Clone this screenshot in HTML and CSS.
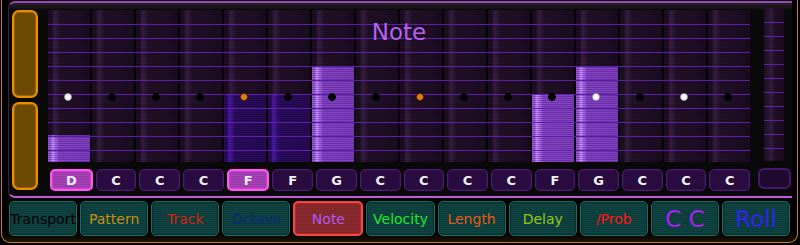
FILE: index.html
```html
<!DOCTYPE html>
<html>
<head>
<meta charset="utf-8">
<link rel="stylesheet" href="styles.css">
</head>
<body>
<div class="frame">
  <div class="panel">
    <div class="side">
      <div class="obtn"></div>
      <div class="obtn"></div>
    </div>
    <div class="main">
      <div class="grid">
        <div class="col"><div class="bar" style="height:27px"></div><span class="dot white"></span></div>
        <div class="col"><span class="dot"></span></div>
        <div class="col"><span class="dot"></span></div>
        <div class="col"><span class="dot"></span></div>
        <div class="col"><div class="bar dim" style="height:68px"></div><span class="dot orange"></span></div>
        <div class="col"><div class="bar dim" style="height:68px"></div><span class="dot"></span></div>
        <div class="col"><div class="bar" style="height:95px"></div><span class="dot"></span></div>
        <div class="col"><span class="dot"></span></div>
        <div class="col"><span class="dot orange"></span></div>
        <div class="col"><span class="dot"></span></div>
        <div class="col"><span class="dot"></span></div>
        <div class="col"><div class="bar" style="height:68px"></div><span class="dot"></span></div>
        <div class="col"><div class="bar" style="height:95px"></div><span class="dot white"></span></div>
        <div class="col"><span class="dot"></span></div>
        <div class="col"><span class="dot white"></span></div>
        <div class="col"><span class="dot"></span></div>
        <div class="lines"></div>
        <div class="title">Note</div>
      </div>
      <div class="notes">
        <div class="nb sel">D</div>
        <div class="nb">C</div>
        <div class="nb">C</div>
        <div class="nb">C</div>
        <div class="nb sel">F</div>
        <div class="nb">F</div>
        <div class="nb">G</div>
        <div class="nb">C</div>
        <div class="nb">C</div>
        <div class="nb">C</div>
        <div class="nb">C</div>
        <div class="nb">F</div>
        <div class="nb">G</div>
        <div class="nb">C</div>
        <div class="nb">C</div>
        <div class="nb">C</div>
      </div>
    </div>
    <div class="right">
      <div class="mini"></div>
      <div class="mbtn"></div>
    </div>
  </div>
  <div class="tabs">
    <div class="tab t-transport">Transport</div>
    <div class="tab t-pattern">Pattern</div>
    <div class="tab t-track">Track</div>
    <div class="tab t-octave">Octave</div>
    <div class="tab sel t-note">Note</div>
    <div class="tab t-velocity">Velocity</div>
    <div class="tab t-length">Length</div>
    <div class="tab t-delay">Delay</div>
    <div class="tab t-prob">/Prob</div>
    <div class="tab big t-cc">C C</div>
    <div class="tab big t-roll">Roll</div>
  </div>
</div>
</body>
</html>
```

FILE: styles.css
```css
html, body {
  margin: 0;
  padding: 0;
  background: #000;
}
body {
  width: 800px;
  height: 245px;
  overflow: hidden;
  font-family: "DejaVu Sans", "Liberation Sans", sans-serif;
}
.frame {
  margin-left: 1px;
  width: 797px;
  height: 243px;
  box-sizing: border-box;
  border: 1px solid #c8870c;
  border-top: 0;
  border-radius: 0 0 9px 9px;
  padding-top: 1px;
  background: linear-gradient(#000 0, #000 232px, #1c1404 242px);
}
.panel {
  margin-left: 6px;
  width: 784px;
  height: 197px;
  box-sizing: border-box;
  border-top: 2px solid #a340c4;
  border-bottom: 2px solid #c25ade;
  border-left: 1px solid #3a2440;
  border-radius: 7px 0 0 7px;
  background: linear-gradient(#242026 0, #161416 5px, #0a090a 7px);
  display: flex;
  padding: 7px 0 0 3px;
}
.side {
  width: 26px;
  display: flex;
  flex-direction: column;
  gap: 4px;
}
.obtn {
  height: 88px;
  box-sizing: border-box;
  border: 2px solid #ea8e00;
  border-radius: 7px;
  background: #6c4900;
  box-shadow: inset 0 0 0 1px #9a6600;
}
.main {
  margin-left: 10px;
  width: 702px;
}
.grid {
  position: relative;
  height: 152px;
  display: grid;
  grid-template-columns: repeat(16, 1fr);
  column-gap: 2px;
  background: #060306;
}
.col {
  position: relative;
  display: flex;
  flex-direction: column;
  justify-content: flex-end;
  background:
    repeating-linear-gradient(rgba(0,0,0,0.16) 0 1px, rgba(0,0,0,0) 1px 2px),
    linear-gradient(to right, #1e0d24 0, #1e0d24 4px, #2e1838 5px, #361f40 7px, #2d1736 10px, #221027 12px, #200e26 32px, #1a0b1f 42px);
}
.bar {
  background:
    repeating-linear-gradient(rgba(40,0,80,0.28) 0 1px, rgba(0,0,0,0) 1px 2px),
    linear-gradient(to right, #9a58d8 0, #9a58d8 3px, #c48cff 4px, #c48cff 6px, #a868ea 7px, #a062e2 9px, #8644c6 11px, #8240c2 42px);
}
.bar.dim {
  background:
    repeating-linear-gradient(rgba(0,0,0,0.18) 0 1px, rgba(0,0,0,0) 1px 2px),
    linear-gradient(to right, #2a0b5a 0, #2a0b5a 3px, #4c1ca4 5px, #44189a 7px, #320f6c 10px, #2c0c5e 12px, #280a56 42px);
}
.dot {
  position: absolute;
  z-index: 2;
  top: 83px;
  left: 16px;
  width: 8px;
  height: 8px;
  border-radius: 50%;
  background: radial-gradient(circle, #000 0, #000 62%, rgba(0,0,0,0) 78%);
}
.dot.white {
  background: radial-gradient(circle, #fff 0, #fff 35%, #d8d8d8 52%, rgba(170,170,170,0.7) 66%, rgba(0,0,0,0) 80%);
}
.dot.orange {
  background: radial-gradient(circle, #ea8a12 0, #d67410 45%, #8a4808 60%, #000 70%, rgba(0,0,0,0) 82%);
}
.lines {
  position: absolute;
  z-index: 1;
  top: 1px;
  left: 0;
  right: 0;
  bottom: 0;
  background: repeating-linear-gradient(to bottom, rgba(0,0,0,0) 0, rgba(0,0,0,0) 13px, #5a1ea8 13px, #5a1ea8 14px);
}
.title {
  position: absolute;
  z-index: 3;
  top: 7px;
  left: 0;
  right: 0;
  text-align: center;
  font-size: 23px;
  line-height: 30px;
  color: #b462f2;
}
.notes {
  margin-top: 7px;
  padding-left: 2px;
  height: 22px;
  display: flex;
  gap: 3px;
}
.nb {
  flex: 1;
  box-sizing: border-box;
  border: 1px solid #4a1a72;
  border-radius: 5px;
  box-shadow: inset 0 0 0 1px #33104f;
  background: #290b3f;
  color: #f2f2f2;
  font-weight: bold;
  font-size: 13px;
  display: flex;
  align-items: center;
  justify-content: center;
}
.nb.sel {
  border: 2px solid #ff55f2;
  box-shadow: inset 0 0 0 1px #d040d0;
  background: repeating-linear-gradient(#a743b6 0 1px, #973aa8 1px 2px);
  color: #eee;
}
.right {
  width: 36px;
  margin-left: 6px;
  margin-top: -2px;
  display: flex;
  flex-direction: column;
  align-items: center;
}
.mini {
  width: 20px;
  height: 153px;
  background:
    repeating-linear-gradient(to bottom, rgba(0,0,0,0) 0, rgba(0,0,0,0) 13px, #5a1ea8 13px, #5a1ea8 14px),
    repeating-linear-gradient(rgba(0,0,0,0.16) 0 1px, rgba(0,0,0,0) 1px 2px),
    linear-gradient(to right, #1e0d24 0, #2e1838 5px, #361f40 7px, #221027 11px, #1c0b21 20px);
  background-position: 0 1px, 0 0, 0 0;
}
.mbtn {
  margin-top: 7px;
  width: 33px;
  height: 21px;
  box-sizing: border-box;
  border: 2px solid #44186a;
  border-radius: 6px;
  background: #1e0a2e;
}
.tabs {
  margin: 3px 0 0 7px;
  width: 781px;
  height: 35px;
  display: flex;
  gap: 3px;
}
.tab {
  flex: 1;
  box-sizing: border-box;
  border: 1px solid #1e6c64;
  border-radius: 5px;
  box-shadow: inset 0 0 0 1px #0a302e;
  background: repeating-linear-gradient(#0f4644 0 1px, #0b3a38 1px 2px);
  display: flex;
  align-items: center;
  justify-content: center;
  font-size: 14px;
  white-space: nowrap;
}
.tab.sel {
  border: 2px solid #f44646;
  box-shadow: inset 0 0 0 1px #b02a2a;
  background: repeating-linear-gradient(#8e2c30 0 1px, #7c2428 1px 2px);
}
.tab.big {
  font-size: 23px;
}
.t-transport { color: #000; }
.t-pattern { color: #c88e10; }
.t-track { color: #d42412; }
.t-octave { color: #0c2a7a; }
.t-note { color: #b458f4; }
.t-velocity { color: #22e62a; }
.t-length { color: #e25a12; }
.t-delay { color: #96c612; }
.t-prob { color: #ff1414; }
.t-cc { color: #a422f2; }
.t-roll { color: #3424f2; }
```
